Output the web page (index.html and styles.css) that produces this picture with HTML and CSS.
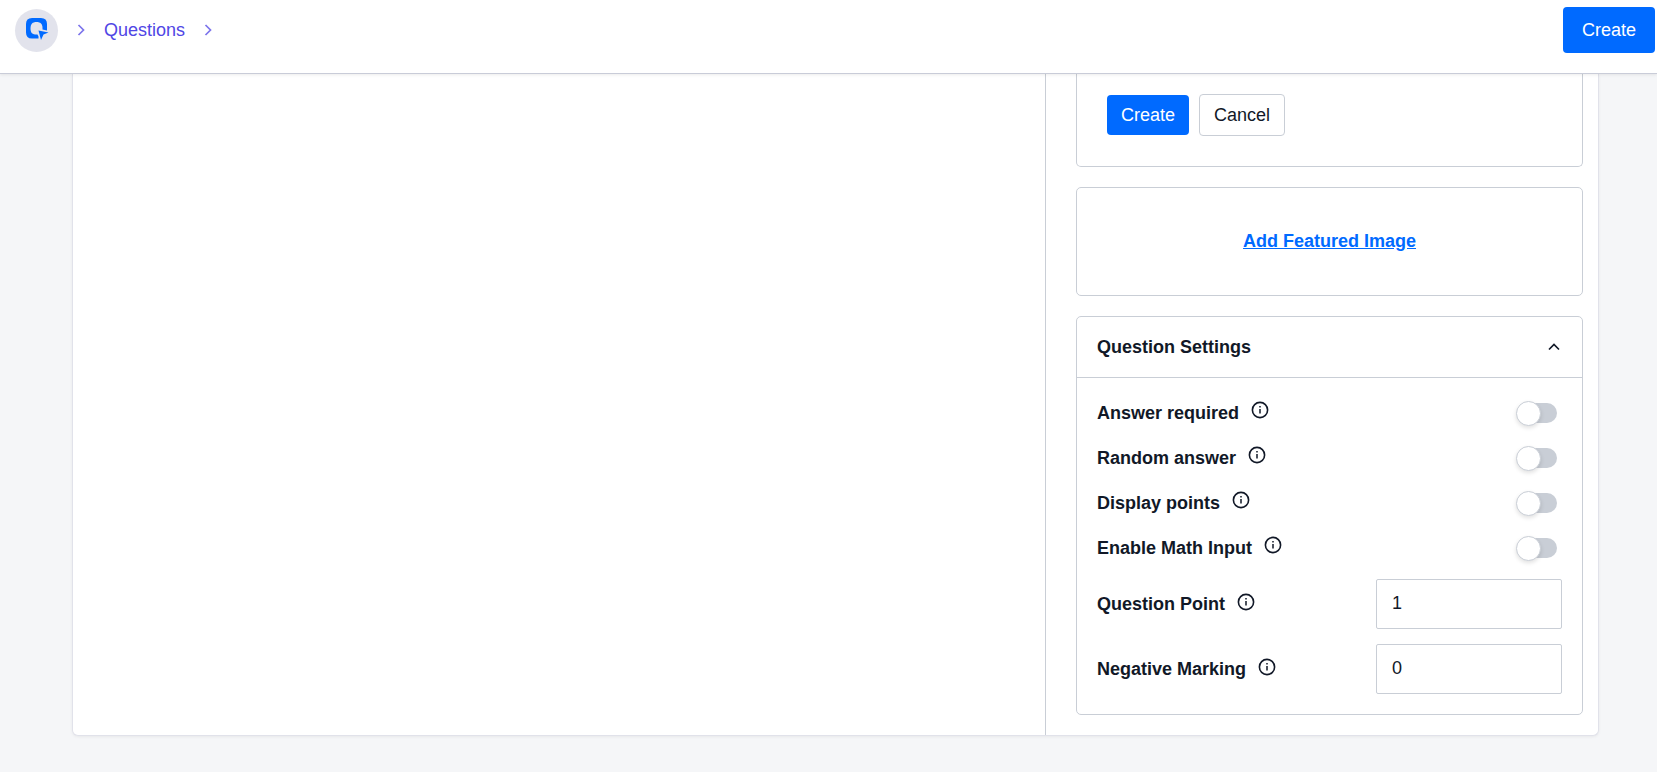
FILE: index.html
```html
<!DOCTYPE html>
<html lang="en">
<head>
    <meta charset="UTF-8">
    <meta name="viewport" content="width=device-width, initial-scale=1.0">
    <title>Create Question</title>
    <link rel="stylesheet" href="styles.css">
</head>
<body>
    <!-- Icons -->
    <svg class="sprite" aria-hidden="true">
        <symbol id="icon-info" viewBox="0 0 18 18">
            <circle cx="9" cy="9" r="7.6" fill="none" stroke="currentColor" stroke-width="1.6"/>
            <path d="M9 8v4.500M9 5v1.600" stroke="currentColor" stroke-width="1.5"/>
        </symbol>
        <symbol id="icon-right" viewBox="0 0 8 12">
            <path d="M1.500 1l5 5-5 5" fill="none" stroke="currentColor" stroke-width="1.7"/>
        </symbol>
    </svg>

    <!-- Header -->
    <header class="header">
        <nav class="breadcrumb">
            <a href="#" class="logo" aria-label="Home">
                <svg width="24" height="24" viewBox="0 0 24 24">
                    <path d="M11 20.500H7Q1 20.500 1 14.500V6Q1 0 7 0H16Q22 0 22 6V12.500L17.500 11.500V10C17.500 6 15.500 4 11.500 4S5.500 6 5.500 10.500 7.500 16.500 11.500 16.500H12.500L13.500 18.500V20.500Z" fill="#006aff"/>
                    <path d="M13.500 12.500L23.500 14.500 18.500 16.500 16 22Z" fill="#006aff" stroke="#e2e3ec" stroke-width="1.5" paint-order="stroke"/>
                </svg>
            </a>
            <svg class="separator"><use href="#icon-right"/></svg>
            <a href="#" class="crumb">Questions</a>
            <svg class="separator"><use href="#icon-right"/></svg>
        </nav>
        <button class="btn btn-primary btn-large">Create</button>
    </header>

    <main class="editor">
        <div class="content"></div>

        <aside class="sidebar">
            <!-- Category form -->
            <div class="box box-form">
                <button class="btn btn-primary">Create</button>
                <button class="btn btn-outline">Cancel</button>
            </div>

            <!-- Featured image -->
            <div class="box box-image">
                <a href="#" class="featured-link">Add Featured Image</a>
            </div>

            <!-- Question settings -->
            <section class="box">
                <h2 class="settings-title">
                    <button class="settings-toggle" aria-expanded="true">
                        Question Settings
                        <svg width="12" height="8" viewBox="0 0 12 8">
                            <path d="M1 6.500l5-5 5 5" fill="none" stroke="currentColor" stroke-width="1.7"/>
                        </svg>
                    </button>
                </h2>
                <div class="settings-body">
                    <div class="row">
                        <label for="required">Answer required</label>
                        <svg class="info"><use href="#icon-info"/></svg>
                        <input type="checkbox" id="required" class="switch">
                    </div>
                    <div class="row">
                        <label for="random">Random answer</label>
                        <svg class="info"><use href="#icon-info"/></svg>
                        <input type="checkbox" id="random" class="switch">
                    </div>
                    <div class="row">
                        <label for="display">Display points</label>
                        <svg class="info"><use href="#icon-info"/></svg>
                        <input type="checkbox" id="display" class="switch">
                    </div>
                    <div class="row">
                        <label for="math">Enable Math Input</label>
                        <svg class="info"><use href="#icon-info"/></svg>
                        <input type="checkbox" id="math" class="switch">
                    </div>
                    <div class="fields">
                        <div class="row row-field">
                            <label for="point">Question Point</label>
                            <svg class="info"><use href="#icon-info"/></svg>
                            <input type="text" inputmode="numeric" id="point" class="number" value="1">
                        </div>
                        <div class="row row-field">
                            <label for="negative">Negative Marking</label>
                            <svg class="info"><use href="#icon-info"/></svg>
                            <input type="text" inputmode="numeric" id="negative" class="number" value="0">
                        </div>
                    </div>
                </div>
            </section>
        </aside>
    </main>
</body>
</html>
```
FILE: styles.css
```css
* {
    box-sizing: border-box;
}
body {
    margin: 0;
    background: #f5f6f8;
    color: #111827;
    font-family: "Liberation Sans", Arial, sans-serif;
    font-size: 18px;
    line-height: 20px;
}
button, input {
    font: inherit;
    color: inherit;
}
.sprite {
    display: none;
}

/* Header */
.header {
    position: sticky;
    top: 0;
    z-index: 1;
    display: flex;
    align-items: flex-start;
    justify-content: space-between;
    height: 74px;
    padding: 7px 2px 0 15px;
    background: white;
    border-bottom: 1px solid #c9ccd8;
    box-shadow: 0 1px 3px rgba(0,0,0,0.08);
}
.breadcrumb {
    display: flex;
    align-items: center;
    gap: 19px;
    height: 46px;
    color: #5046e5;
}
.logo {
    display: flex;
    align-items: center;
    justify-content: center;
    width: 43px;
    height: 43px;
    border-radius: 50%;
    background: #e2e3ec;
}
.separator {
    width: 8px;
    height: 12px;
    opacity: 0.75;
}
.crumb {
    color: inherit;
    text-decoration: none;
}

/* Buttons */
.btn {
    height: 40px;
    padding: 0 14px;
    border: none;
    border-radius: 4px;
    cursor: pointer;
}
.btn-primary {
    background: #006aff;
    color: white;
}
.btn-large {
    height: 46px;
    padding: 0 19px;
}
.btn-outline {
    height: 42px;
    background: white;
    border: 1px solid #c9ced6;
}

/* Layout */
.editor {
    display: grid;
    grid-template-columns: 1fr 553px;
    margin: 0 58px 37px 72px;
    background: white;
    border: 1px solid #e1e2ea;
    border-top: none;
    border-radius: 0 0 6px 6px;
    box-shadow: 0 1px 3px rgba(0,0,0,0.06);
}
.sidebar {
    display: flex;
    flex-direction: column;
    gap: 20px;
    padding: 0 15px 20px 30px;
    border-left: 1px solid #c9ced6;
}
.box {
    border: 1px solid #c9ced6;
    border-radius: 5px;
}
.box-form {
    display: flex;
    align-items: center;
    gap: 10px;
    padding: 20px 30px 30px;
    border-top: none;
    border-radius: 0 0 5px 5px;
}
.box-image {
    padding: 43px 20px 44px;
    text-align: center;
}
.featured-link {
    color: #006aff;
    font-weight: bold;
}

/* Question settings */
.settings-title {
    margin: 0;
    font-size: 18px;
    border-bottom: 1px solid #c9ced6;
}
.settings-toggle {
    display: flex;
    align-items: center;
    justify-content: space-between;
    width: 100%;
    height: 60px;
    padding: 0 22px 0 20px;
    background: none;
    border: none;
    cursor: pointer;
}
.settings-body {
    padding: 12px 20px 20px;
}
.row {
    display: flex;
    align-items: center;
    gap: 12px;
    height: 45px;
    font-weight: bold;
}
.row-field {
    height: 50px;
}
.info {
    width: 18px;
    height: 18px;
    margin-bottom: 5px;
}
.switch {
    appearance: none;
    position: relative;
    width: 40px;
    height: 20px;
    margin: 0 5px 0 auto;
    border-radius: 10px;
    background: #c9ced6;
    cursor: pointer;
}
.switch::before {
    content: "";
    position: absolute;
    top: -2px;
    left: -1px;
    width: 23px;
    height: 23px;
    border: 1px solid #c9ced6;
    border-radius: 50%;
    background: white;
    box-shadow: 0 2px 4px rgba(0,0,0,0.12);
}
.switch:checked {
    background: #006aff;
}
.switch:checked::before {
    left: 17px;
}
.fields {
    display: flex;
    flex-direction: column;
    gap: 15px;
    margin-top: 9px;
}
.number {
    width: 186px;
    height: 50px;
    margin-left: auto;
    padding: 0 15px 2px;
    border: 1px solid #c9ced6;
    border-radius: 2px;
    background: white;
    font-weight: normal;
}
```
